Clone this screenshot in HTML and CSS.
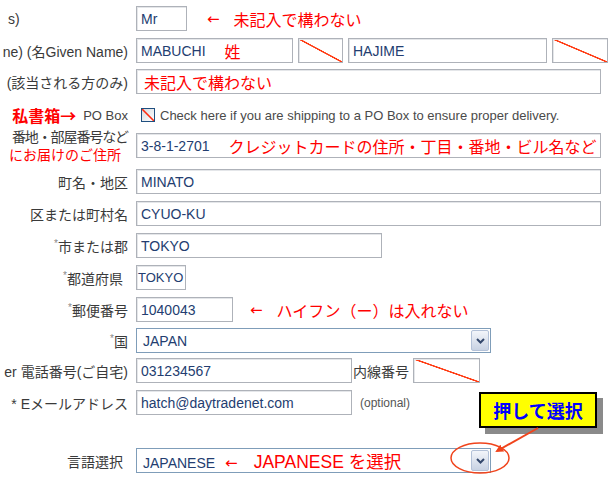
FILE: index.html
```html
<!DOCTYPE html>
<html lang="ja">
<head>
  <meta charset="UTF-8">
  <meta name="viewport" content="width=device-width, initial-scale=1.0">
  <title>お届け先入力</title>
  <link rel="stylesheet" href="styles.css">
</head>
<body>
  <div class="form">
    <div class="row">
      <div class="label label-start">s)</div>
      <div class="field">
        <div class="box w-title">Mr</div>
        <span class="arrow arrow-title">←</span>
        <span class="note">未記入で構わない</span>
      </div>
    </div>

    <div class="row gap-6">
      <div class="label">ne) (名Given Name)</div>
      <div class="field">
        <div class="box w-family">MABUCHI<span class="note note-family">姓</span></div>
        <div class="box cross w-cross1"></div>
        <div class="box w-given">HAJIME</div>
        <div class="box cross w-cross2"></div>
      </div>
    </div>

    <div class="row gap-10">
      <div class="label">(該当される方のみ)</div>
      <div class="field">
        <div class="box w-wide box-note"><span class="note">未記入で構わない</span></div>
      </div>
    </div>

    <div class="row row-po">
      <div class="label"><span class="note note-po">私書箱→</span><span class="po">PO Box</span></div>
      <div class="field">
        <span class="check"></span>
        <span class="hint">Check here if you are shipping to a PO Box to ensure proper delivery.</span>
      </div>
    </div>

    <div class="row gap-11">
      <div class="label label-stack">
        <span class="tight">番地・部屋番号など</span>
        <span class="note note-small">にお届けのご住所</span>
      </div>
      <div class="field">
        <div class="box w-wide">3-8-1-2701<span class="note note-address">クレジットカードの住所・丁目・番地・ビル名など</span></div>
      </div>
    </div>

    <div class="row">
      <div class="label">町名・地区</div>
      <div class="field">
        <div class="box w-wide">MINATO</div>
      </div>
    </div>

    <div class="row">
      <div class="label">区または町村名</div>
      <div class="field">
        <div class="box w-wide">CYUO-KU</div>
      </div>
    </div>

    <div class="row">
      <div class="label"><span class="req">*</span>市または郡</div>
      <div class="field">
        <div class="box w-city">TOKYO</div>
      </div>
    </div>

    <div class="row">
      <div class="label label-in"><span class="req">*</span>都道府県</div>
      <div class="field">
        <div class="box w-pref">TOKYO</div>
      </div>
    </div>

    <div class="row gap-6">
      <div class="label"><span class="req">*</span>郵便番号</div>
      <div class="field">
        <div class="box w-zip">1040043</div>
        <span class="arrow arrow-zip">←</span>
        <span class="note">ハイフン（ー）は入れない</span>
      </div>
    </div>

    <div class="row gap-5">
      <div class="label"><span class="req">*</span>国</div>
      <div class="field">
        <div class="select">
          <span>JAPAN</span>
          <span class="select-btn">
            <svg width="9" height="6" viewBox="0 0 9 6"><polyline points="1,1 4.5,4.5 8,1" fill="none" stroke="#33476c" stroke-width="2"/></svg>
          </span>
        </div>
      </div>
    </div>

    <div class="row">
      <div class="label">er 電話番号(ご自宅)</div>
      <div class="field">
        <div class="box w-phone">031234567</div>
        <span class="ext">内線番号</span>
        <div class="box cross w-ext"></div>
      </div>
    </div>

    <div class="row gap-33">
      <div class="label">* Eメールアドレス</div>
      <div class="field">
        <div class="box w-phone">hatch@daytradenet.com</div>
        <span class="optional">(optional)</span>
      </div>
    </div>

    <div class="row">
      <div class="label label-in">言語選択</div>
      <div class="field">
        <div class="select">
          <span>JAPANESE<span class="arrow arrow-lang">←</span><span class="note note-lang">JAPANESE を選択</span></span>
          <span class="select-btn">
            <svg width="9" height="6" viewBox="0 0 9 6"><polyline points="1,1 4.5,4.5 8,1" fill="none" stroke="#33476c" stroke-width="2"/></svg>
          </span>
        </div>
      </div>
    </div>

    <!-- annotations drawn over the form -->
    <div class="callout">押して選択</div>
    <svg class="marks" width="614" height="479" viewBox="0 0 614 479">
      <defs>
        <marker id="head" markerWidth="8" markerHeight="8" refX="6" refY="4" orient="auto" markerUnits="userSpaceOnUse">
          <path d="M0,0 L8,4 L0,8 Z" fill="#f0441c"/>
        </marker>
      </defs>
      <line x1="538" y1="428" x2="497" y2="451" stroke="#f0441c" stroke-width="2" marker-end="url(#head)"/>
      <ellipse cx="480" cy="458" rx="29" ry="15" fill="none" stroke="#f0441c" stroke-width="1.5"/>
    </svg>
  </div>
</body>
</html>
```

FILE: styles.css
```css
* {
  margin: 0;
  padding: 0;
  box-sizing: border-box;
}

body {
  background-color: #ffffff;
  color: #3a3a3a;
  font-family: "Liberation Sans", "Noto Sans CJK JP", sans-serif;
}

.form {
  position: relative;
  width: 614px;
  height: 479px;
  padding-top: 6px;
  overflow: hidden;
}

.row {
  display: flex;
  align-items: center;
  height: 25px;
  margin-bottom: 7px;
}

.gap-5 { margin-bottom: 5px; }
.gap-6 { margin-bottom: 6px; }
.gap-10 { margin-bottom: 10px; }
.gap-11 { margin-bottom: 11px; }
.gap-33 { margin-bottom: 33px; }

.row-po {
  height: 22px;
  margin-bottom: 7px;
}

.label {
  width: 128px;
  flex-shrink: 0;
  display: flex;
  justify-content: flex-end;
  align-items: center;
  white-space: nowrap;
  font-size: 14px;
  color: #3a3a3a;
}

.label-start {
  justify-content: flex-start;
  padding-left: 8px;
}

.label-in {
  padding-right: 5px;
}

.label-stack {
  flex-direction: column;
  align-items: flex-end;
  line-height: 17px;
}

.tight {
  letter-spacing: -1.1px;
}

.req {
  font-size: 10px;
  color: #888888;
  align-self: flex-start;
  margin-top: 2px;
}

.field {
  display: flex;
  align-items: center;
  height: 100%;
  margin-left: 8px;
}

.box {
  height: 25px;
  border: 1px solid #aeb2b9;
  box-shadow: inset 1px 1px 0 #e4e6e9;
  padding: 0 4px;
  display: flex;
  align-items: center;
  font-size: 14px;
  color: #233d70;
  white-space: nowrap;
  overflow: hidden;
}

.box + .box {
  margin-left: 5px;
}

.cross {
  background: linear-gradient(to top right, transparent calc(50% - 1px), #ff3c14 calc(50% - 0.5px), #ff3c14 calc(50% + 0.5px), transparent calc(50% + 1px));
}

.w-title { width: 51px; }
.w-family { width: 157px; }
.w-cross1 { width: 45px; }
.w-given { width: 199px; }
.w-cross2 { width: 56px; }
.w-wide { width: 465px; }
.w-city { width: 246px; }
.w-pref { width: 50px; padding: 0 1px; font-size: 13px; }
.w-zip { width: 97px; }
.w-phone { width: 216px; }
.w-ext { width: 67px; margin-left: 4px; }

.box-note {
  padding-left: 7px;
}

.note {
  color: #ff0000;
  font-family: "Noto Sans CJK JP", sans-serif;
  font-size: 16px;
  white-space: nowrap;
}

.note-family { margin-left: 19px; }
.note-address { margin-left: 19px; font-size: 16px; }
.note-small { font-size: 14px; padding-right: 7px; }
.note-lang { font-family: "Liberation Sans", "Noto Sans CJK JP", sans-serif; font-size: 17.5px; }

.note-po {
  font-size: 16px;
  font-weight: bold;
  margin-right: 7px;
}

.po {
  font-size: 13px;
  color: #444444;
}

.arrow {
  color: #ff0000;
  font-size: 15px;
  font-family: "DejaVu Sans", sans-serif;
}

.arrow-title { margin: 0 14px 0 20px; }
.arrow-zip { margin: 0 14px 0 17px; }
.arrow-lang { margin: 0 16px 0 10px; }

.check {
  width: 14px;
  height: 14px;
  margin-left: 5px;
  border: 1px solid #1f4f80;
  background:
    linear-gradient(to top right, transparent calc(50% - 1px), #ff2a10 calc(50% - 0.5px), #ff2a10 calc(50% + 0.5px), transparent calc(50% + 1px)),
    linear-gradient(135deg, #d6d9de, #ffffff);
}

.hint {
  margin-left: 5px;
  font-size: 13px;
  color: #4a4a4a;
  white-space: nowrap;
}

.select {
  width: 355px;
  height: 25px;
  border: 1px solid #7f9db9;
  display: flex;
  align-items: center;
  justify-content: space-between;
  padding: 0 1px 0 6px;
  font-size: 14px;
  color: #233d70;
  white-space: nowrap;
}

.select-btn {
  width: 18px;
  height: 21px;
  border: 1px solid #b3c1d8;
  border-radius: 2px;
  background: linear-gradient(#f3f5fa, #c8d2e3);
  display: flex;
  align-items: center;
  justify-content: center;
}

.ext {
  margin-left: 1px;
  font-size: 14px;
  color: #3a3a3a;
  font-family: "Noto Sans CJK JP", sans-serif;
}

.optional {
  margin-left: 8px;
  font-size: 12px;
  color: #555555;
}

.callout {
  position: absolute;
  left: 479px;
  top: 392px;
  width: 118px;
  height: 36px;
  border: 2px solid #000000;
  background-color: #ffff00;
  box-shadow: 6px 6px 0 #8a8a8a;
  display: flex;
  align-items: center;
  justify-content: center;
  color: #0000ff;
  font-family: "Noto Sans CJK JP", sans-serif;
  font-size: 18px;
  font-weight: bold;
}

.marks {
  position: absolute;
  left: 0;
  top: 0;
  pointer-events: none;
}
```
